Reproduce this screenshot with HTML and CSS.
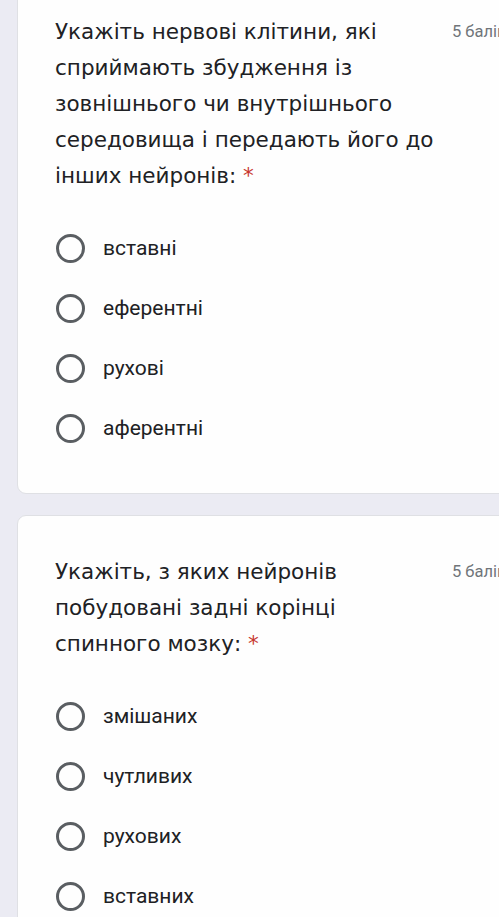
FILE: index.html
```html
<!DOCTYPE html>
<html lang="uk">
<head>
<meta charset="utf-8">
<link rel="stylesheet" href="styles.css">
</head>
<body>
<main class="page">
  <section class="card first">
    <div class="head">
      <div class="title">Укажіть нервові клітини, які сприймають збудження із зовнішнього чи внутрішнього середовища і передають його до інших нейронів: <span class="req">*</span></div>
      <div class="points">5 балів</div>
    </div>
    <ul class="options">
      <li class="option"><span class="radio"></span><span class="label">вставні</span></li>
      <li class="option"><span class="radio"></span><span class="label">еферентні</span></li>
      <li class="option"><span class="radio"></span><span class="label">рухові</span></li>
      <li class="option"><span class="radio"></span><span class="label">аферентні</span></li>
    </ul>
  </section>
  <section class="card">
    <div class="head">
      <div class="title">Укажіть, з яких нейронів побудовані задні корінці спинного мозку: <span class="req">*</span></div>
      <div class="points">5 балів</div>
    </div>
    <ul class="options">
      <li class="option"><span class="radio"></span><span class="label">змішаних</span></li>
      <li class="option"><span class="radio"></span><span class="label">чутливих</span></li>
      <li class="option"><span class="radio"></span><span class="label">рухових</span></li>
      <li class="option"><span class="radio"></span><span class="label">вставних</span></li>
    </ul>
  </section>
</main>
</body>
</html>
```

FILE: styles.css
```css
html, body {
  margin: 0;
  padding: 0;
  background: #ebebf3;
  overflow: hidden;
}
.page {
  width: 560px;
  padding-left: 17px;
  display: flex;
  flex-direction: column;
  gap: 21px;
  margin-top: -25px;
}
.card {
  background: #fefefe;
  border-radius: 9px;
  border: 1px solid #dfe0e4;
  padding: 38px 0 35px 37px;
}
.head {
  display: flex;
  align-items: flex-start;
}
.title {
  width: 384px;
  flex: none;
  font-family: "DejaVu Sans", "Liberation Sans", sans-serif;
  font-size: 21.5px;
  line-height: 36px;
  color: #202124;
}
.req {
  color: #c8362e;
}
.points {
  margin-left: 13px;
  font-family: "Roboto", "Liberation Sans", sans-serif;
  font-size: 16.5px;
  line-height: 36px;
  color: #70757a;
  white-space: nowrap;
}
.options {
  list-style: none;
  margin: 24px 0 0;
  padding: 0;
}
.option {
  height: 60px;
  display: flex;
  align-items: center;
  gap: 18px;
}
.radio {
  width: 23px;
  height: 23px;
  border: 3px solid #5a5e62;
  border-radius: 50%;
  flex: none;
  margin-left: 1px;
}
.label {
  font-family: "Roboto", "Liberation Sans", sans-serif;
  font-size: 21px;
  color: #202124;
}
```
